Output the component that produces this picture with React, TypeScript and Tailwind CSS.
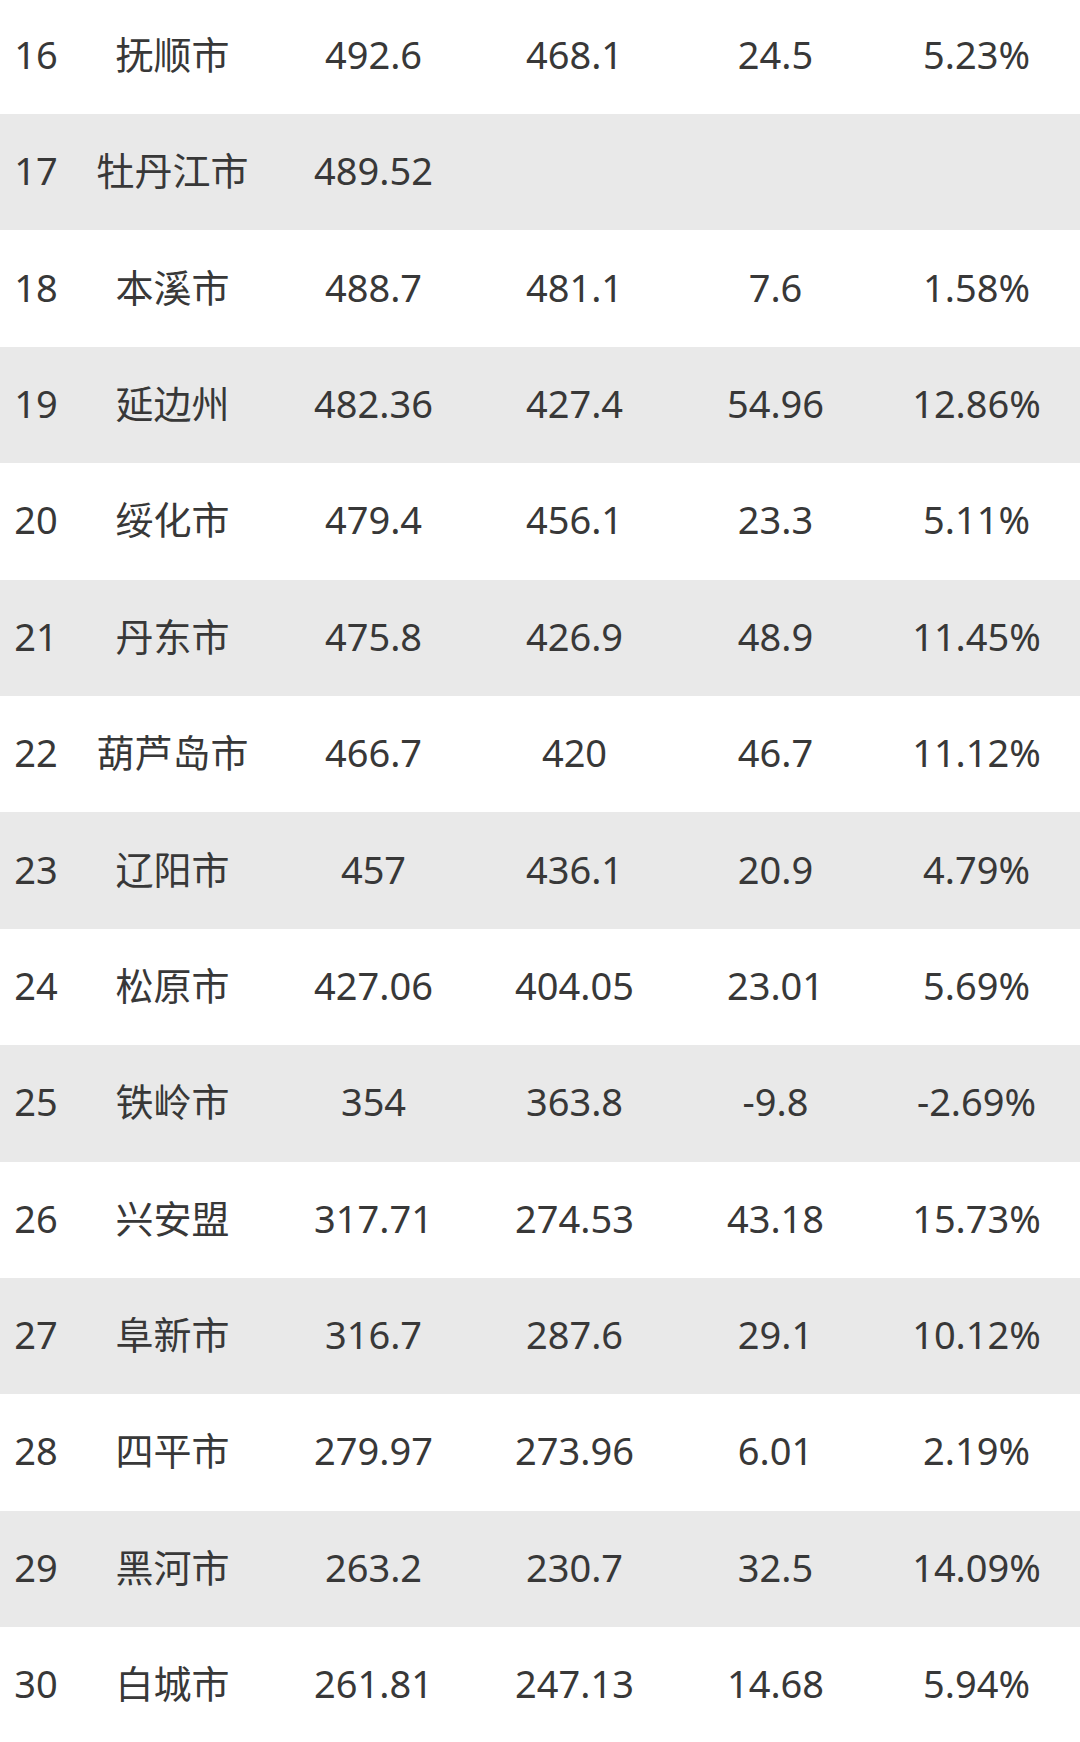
const rows: string[][] = [
  ["16", "抚顺市", "492.6", "468.1", "24.5", "5.23%"],
  ["17", "牡丹江市", "489.52", "", "", ""],
  ["18", "本溪市", "488.7", "481.1", "7.6", "1.58%"],
  ["19", "延边州", "482.36", "427.4", "54.96", "12.86%"],
  ["20", "绥化市", "479.4", "456.1", "23.3", "5.11%"],
  ["21", "丹东市", "475.8", "426.9", "48.9", "11.45%"],
  ["22", "葫芦岛市", "466.7", "420", "46.7", "11.12%"],
  ["23", "辽阳市", "457", "436.1", "20.9", "4.79%"],
  ["24", "松原市", "427.06", "404.05", "23.01", "5.69%"],
  ["25", "铁岭市", "354", "363.8", "-9.8", "-2.69%"],
  ["26", "兴安盟", "317.71", "274.53", "43.18", "15.73%"],
  ["27", "阜新市", "316.7", "287.6", "29.1", "10.12%"],
  ["28", "四平市", "279.97", "273.96", "6.01", "2.19%"],
  ["29", "黑河市", "263.2", "230.7", "32.5", "14.09%"],
  ["30", "白城市", "261.81", "247.13", "14.68", "5.94%"],
];

export default function App() {
  return (
    <div className="h-[1742px] w-[1080px] overflow-hidden bg-white">
      <div
        className="-mt-[2.4px] flex flex-col text-[38px] font-normal text-[#383838]"
        style={{ fontFamily: '"Noto Sans", "Noto Sans CJK SC", sans-serif' }}
      >
        {rows.map((r, i) => (
          <div
            key={r[0]}
            className={`grid h-[116.4px] grid-cols-[72px_repeat(5,201px)] items-center pb-[4px] ${
              i % 2 === 1 ? "bg-[#e9e9e9]" : "bg-white"
            }`}
          >
            {r.map((cell, j) => (
              <div key={j} className="text-center leading-none whitespace-nowrap">
                {cell}
              </div>
            ))}
          </div>
        ))}
      </div>
    </div>
  );
}
